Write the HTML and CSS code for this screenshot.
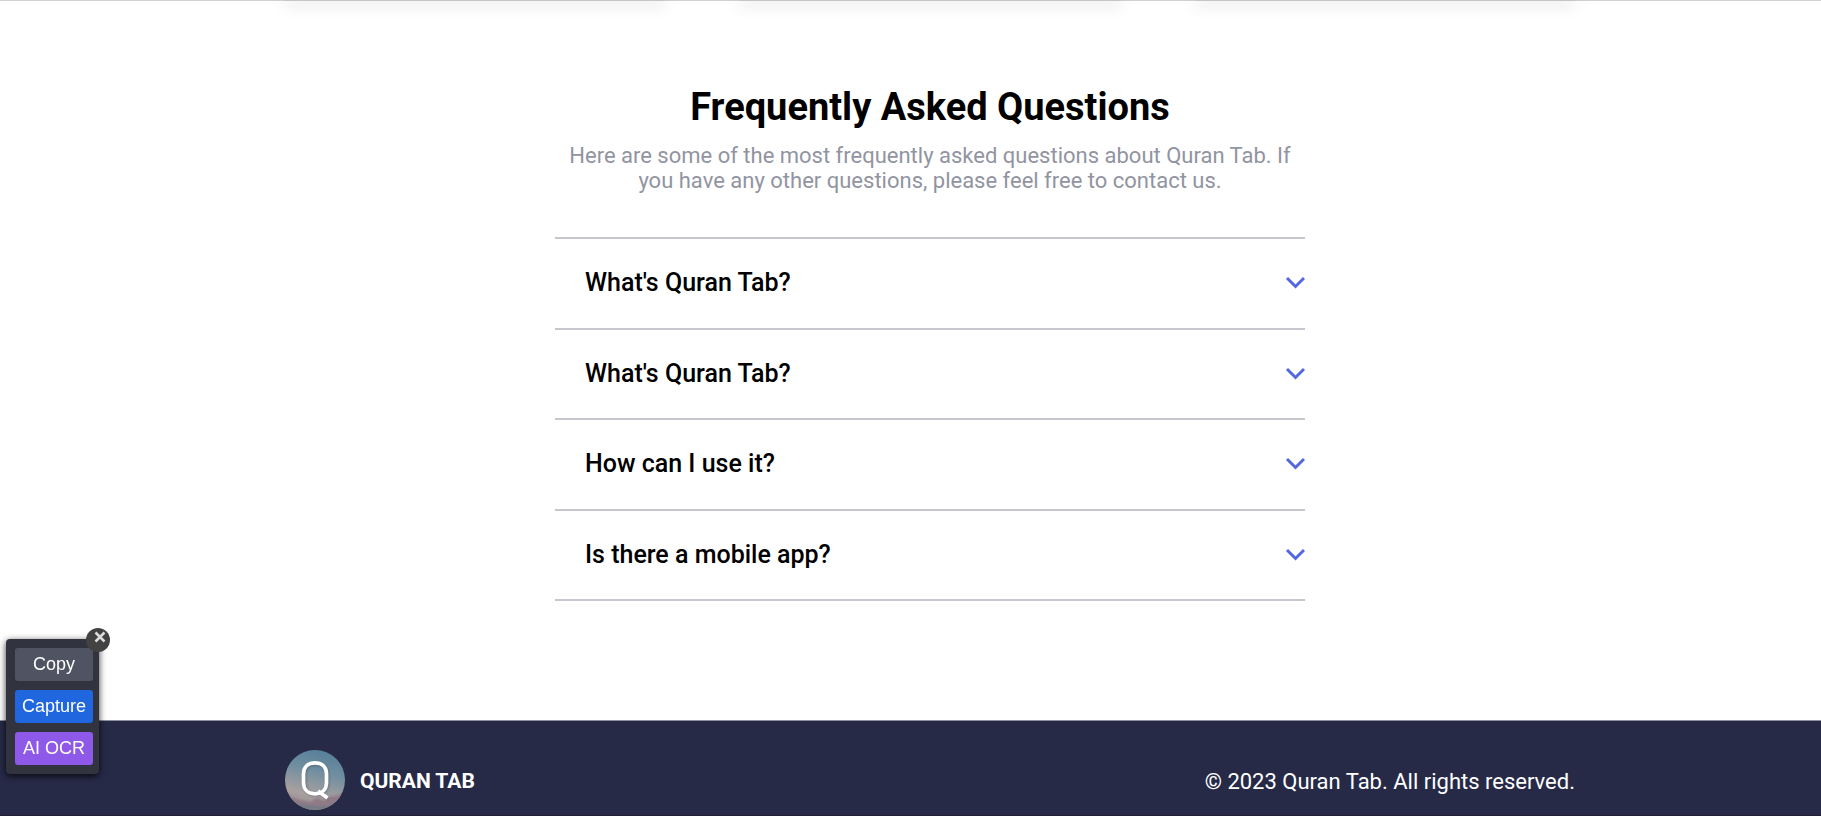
FILE: index.html
```
<!DOCTYPE html>
<html lang="en">
<head>
<meta charset="utf-8">
<title>Quran Tab</title>
<link rel="stylesheet" href="styles.css">
</head>
<body>
<div class="page">
  <div class="cards-edge">
    <div class="cards container">
      <div class="card"></div>
      <div class="card"></div>
      <div class="card"></div>
    </div>
  </div>
  <main class="faq">
    <header class="faq-header">
      <h2 class="faq-title">Frequently Asked Questions</h2>
      <p class="faq-intro">Here are some of the most frequently asked questions about Quran Tab. If<br>you have any other questions, please feel free to contact us.</p>
    </header>
    <div class="faq-list">
      <h3 class="faq-item"><button class="faq-button" type="button" aria-expanded="false">What's Quran Tab?<svg class="chevron" viewBox="0 0 20 14" aria-hidden="true"><path d="M2 2l8.500 8.500 8.500-8.500"/></svg></button></h3>
      <h3 class="faq-item"><button class="faq-button" type="button" aria-expanded="false">What's Quran Tab?<svg class="chevron" viewBox="0 0 20 14" aria-hidden="true"><path d="M2 2l8.500 8.500 8.500-8.500"/></svg></button></h3>
      <h3 class="faq-item"><button class="faq-button" type="button" aria-expanded="false">How can I use it?<svg class="chevron" viewBox="0 0 20 14" aria-hidden="true"><path d="M2 2l8.500 8.500 8.500-8.500"/></svg></button></h3>
      <h3 class="faq-item"><button class="faq-button" type="button" aria-expanded="false">Is there a mobile app?<svg class="chevron" viewBox="0 0 20 14" aria-hidden="true"><path d="M2 2l8.500 8.500 8.500-8.500"/></svg></button></h3>
    </div>
  </main>
  <footer class="footer">
    <div class="footer-row container">
      <div class="brand">
        <svg class="logo" viewBox="0 0 60 60" aria-hidden="true">
          <defs>
            <linearGradient id="sky" x1=".65" y1="0" x2=".4" y2="1">
              <stop offset="0" stop-color="#557f98"/>
              <stop offset=".35" stop-color="#6f8ea0"/>
              <stop offset=".75" stop-color="#a8a09f"/>
              <stop offset="1" stop-color="#9b8c90"/>
            </linearGradient>
            <clipPath id="disc"><circle cx="30" cy="30" r="30"/></clipPath>
            <filter id="soft" x="-20%" y="-20%" width="140%" height="140%"><feGaussianBlur stdDeviation="1.200"/></filter>
          </defs>
          <g clip-path="url(#disc)">
            <path fill="url(#sky)" d="M0 0h60v60H0z"/>
            <g filter="url(#soft)">
              <path fill="#8f7a86" d="M0 45l9 3 6 2 10 2 7-4 8 3 6-5 5 0 9-4v18H0z"/>
              <path fill="#747a86" d="M0 51l12 3 9 1 10 1 12 0 8-4 9-2v10H0z"/>
            </g>
          </g>
          <g fill="none" stroke="#3d4c5c" stroke-opacity=".45" stroke-width="3.700" filter="url(#soft)"><path d="M31 14c7 0 11.500 4 11.500 11v8c0 7-4.500 11.500-11.500 11.500S19.500 40 19.500 33v-8c0-7 4.500-11 11.500-11zM34 42l9 7"/></g>
          <g fill="none" stroke="#fff" stroke-width="3.700"><path d="M30 12.800c7 0 11.500 4.200 11.500 11.200v8.500c0 7-4.500 11.300-11.500 11.300S18.500 39.500 18.500 32.500V24c0-7 4.500-11.200 11.500-11.200zM33 41l9.500 7"/></g>
        </svg>
        <span class="brand-name">QURAN TAB</span>
      </div>
      <p class="copyright">© 2023 Quran Tab. All rights reserved.</p>
    </div>
  </footer>
</div>
<aside class="capture-panel" aria-label="Capture tools">
  <button class="tool tool-copy" type="button">Copy</button>
  <button class="tool tool-capture" type="button">Capture</button>
  <button class="tool tool-ocr" type="button">AI OCR</button>
  <button class="panel-close" type="button" aria-label="Close"><svg class="close-icon" viewBox="0 0 12 12" aria-hidden="true"><path d="M1.500 1.500l9 9m0-9l-9 9"/></svg></button>
</aside>
</body>
</html>
```
FILE: styles.css
```
* {
  box-sizing: border-box;
}

body,
h2,
h3,
p {
  margin: 0;
}

body {
  background: #fff;
  color: #000;
  font-family: Roboto, "Noto Sans", sans-serif;
}

button {
  border: 0;
  font-family: inherit;
  cursor: pointer;
}

.page {
  display: flex;
  flex-direction: column;
  min-height: 100vh;
}

.cards-edge,
.faq,
.footer {
  padding-left: 39px;
}

.container {
  width: 100%;
  max-width: 1290px;
  margin: 0 auto;
}

.cards-edge {
  background: #d2d2d2;
}

.cards {
  display: flex;
  justify-content: space-between;
  gap: 76px;
}

.card {
  flex: 1;
  height: 1px;
  background: #c6c4c6;
  box-shadow: 0 2px 14px rgba(40, 30, 40, 0.7);
}

.faq {
  flex: 1;
  padding-top: 83px;
  padding-bottom: 30px;
}

.faq-header {
  text-align: center;
}

.faq-title {
  font-size: 38px;
  line-height: 46px;
  font-weight: 700;
}

.faq-intro {
  margin-top: 13px;
  color: #9194a1;
  font-size: 22px;
  line-height: 25px;
}

.faq-list {
  max-width: 750px;
  margin: 44px auto 0;
  border-top: 2px solid #c8c7cf;
}

.faq-item {
  border-bottom: 2px solid #c8c7cf;
}

.faq-item:nth-child(even) .faq-button {
  padding-bottom: 29px;
}

.faq-button {
  display: flex;
  align-items: center;
  justify-content: space-between;
  width: 100%;
  padding: 29px 0 30px 30px;
  background: none;
  color: #000;
  font-size: 25px;
  line-height: 30px;
  font-weight: 500;
  text-align: left;
}

.chevron {
  width: 20px;
  height: 14px;
  fill: none;
  stroke: #5368df;
  stroke-width: 3;
}

.footer {
  padding-top: 29px;
  padding-bottom: 5px;
  border-top: 1px solid #8e909f;
  border-bottom: 1px solid #211f35;
  background: #262a47;
  color: #fff;
}

.footer-row {
  display: flex;
  align-items: center;
  justify-content: space-between;
}

.brand {
  display: flex;
  align-items: center;
  gap: 15px;
}

.logo {
  width: 60px;
  height: 60px;
}

.brand-name,
.copyright {
  padding-top: 2px;
}

.brand-name {
  font-size: 21px;
  font-weight: 700;
}

.copyright {
  font-size: 22px;
}

.capture-panel {
  position: fixed;
  bottom: 42px;
  left: 6px;
  display: flex;
  flex-direction: column;
  gap: 9px;
  padding: 9px 6px 9px 9px;
  border-radius: 4px;
  background: #31343f;
  box-shadow: 0 2px 7px rgba(0, 0, 0, 0.8);
  font-family: "Liberation Sans", Arial, sans-serif;
}

.tool {
  width: 78px;
  padding: 0;
  border-radius: 3px;
  color: #fff;
  font-size: 18px;
  line-height: 33px;
}

.tool-copy {
  background: #505362;
}

.tool-capture {
  background: #1f66df;
}

.tool-ocr {
  background: #8e58e8;
}

.panel-close {
  position: absolute;
  top: -11px;
  right: -11px;
  display: flex;
  justify-content: center;
  width: 24px;
  height: 24px;
  padding: 3px 0 0 4px;
  border-radius: 50%;
  background: #424242;
}

.close-icon {
  width: 12px;
  height: 12px;
  fill: none;
  stroke: #ddd;
  stroke-width: 2.5;
}
```
